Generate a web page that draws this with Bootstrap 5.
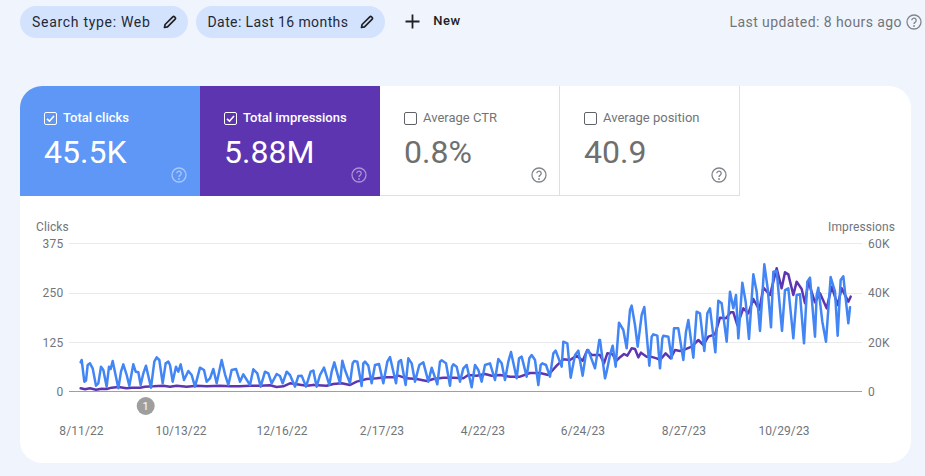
<!DOCTYPE html>
<html lang="en">
<head>
<meta charset="utf-8">
<title>Performance</title>
<link href="https://cdn.jsdelivr.net/npm/bootstrap@5.3.0/dist/css/bootstrap.min.css" rel="stylesheet">
<style>
html,body{height:100%;overflow:hidden}
body{background:#f0f4fd;font-family:Roboto,"Liberation Sans",sans-serif;color:#3c4043}
.topbar{height:86px;padding:6px 3px 0 20px;align-items:flex-start}
.pill{height:32px;border-radius:16px;background:#d3e3fd;color:#1f2937;font-size:14px;padding:0 11px 0 12px;display:flex;align-items:center;gap:12px;white-space:nowrap}
.pill-a{letter-spacing:.7px}
.pill-b{letter-spacing:.4px}
.pill svg{width:14px;height:14px}
.newbtn{font-size:13px;font-weight:500;color:#202124;letter-spacing:.5px;margin-left:20px;height:30px;gap:13px}
.updated{font-size:14px;color:#70757a;letter-spacing:.42px;height:32px;gap:4px}
.updated svg{width:16px;height:16px}
.panel{margin:0 14px 0 20px;height:377px;border-radius:22px;background:#fff;overflow:hidden;border:0}
.tile{width:180px;height:110px;padding:21px 0 0 24px;position:relative;flex:none}
.tile-blue{background:#5e97f6;color:#fff}
.tile-purple{background:#5e35b1;color:#fff}
.tile-plain{background:#fff;color:#70757a;border-right:1px solid #e0e0e0;border-bottom:1px solid #e0e0e0}
.tile-plain .val{color:#6f6f6f}
.tile-plain .tip{right:12px;bottom:12px}
.lab{font-size:13px;line-height:22px;gap:6px}
.tile-blue .lab,.tile-purple .lab{font-weight:500}
.lab svg{width:13px;height:13px;flex:none}
.val{font-size:32px;line-height:38px;margin-top:4px}
.tip{position:absolute;right:13px;bottom:13px;width:16px;height:16px}
.plot{display:block;width:891px;height:267px}
.plot text{font-family:Roboto,"Liberation Sans",sans-serif;font-size:12px;fill:#70757a;letter-spacing:.1px}
.plot .axisnum{letter-spacing:.25px}
.gl{stroke:#e8eaed;stroke-width:1}
.ln{fill:none;stroke-linejoin:round;stroke-linecap:round;stroke-width:2.5;vector-effect:non-scaling-stroke}
.ln-b{stroke:#4285f4}
.ln-p{stroke:#5e35b1}
.plot .pin{fill:#fff;font-size:11px;letter-spacing:0}
</style>
</head>
<body>
<div class="topbar d-flex">
  <div class="pill pill-a me-2">Search type: Web
    <svg viewBox="0 0 14 14" fill="none" stroke="#202124" stroke-width="1.7" stroke-linejoin="round"><path d="M1.500 12.500l.6-3L9.800 1.800a1.200 1.200 0 0 1 1.700 0l.7.7a1.200 1.200 0 0 1 0 1.700L4.500 11.900z"/></svg>
  </div>
  <div class="pill pill-b">Date: Last 16 months
    <svg viewBox="0 0 14 14" fill="none" stroke="#202124" stroke-width="1.7" stroke-linejoin="round"><path d="M1.500 12.500l.6-3L9.800 1.800a1.200 1.200 0 0 1 1.700 0l.7.7a1.200 1.200 0 0 1 0 1.700L4.500 11.900z"/></svg>
  </div>
  <div class="newbtn d-flex align-items-center">
    <svg width="15" height="15" viewBox="0 0 15 15" stroke="#202124" stroke-width="1.8"><path d="M7.500.5v14M.5 7.500h14"/></svg>New
  </div>
  <div class="updated d-flex align-items-center ms-auto">Last updated: 8 hours ago
    <svg viewBox="0 0 16 16" fill="none"><circle cx="8" cy="8" r="7" stroke="#80868b" stroke-width="1.300"/><path d="M5.800 6.300a2.200 2.200 0 1 1 3.500 1.800c-.8.5-1.300 1-1.300 1.900" stroke="#80868b" stroke-width="1.300"/><circle cx="8" cy="12" r=".9" fill="#80868b"/></svg>
  </div>
</div>

<div class="card panel">
  <div class="d-flex">
    <div class="tile tile-blue">
      <div class="lab d-flex align-items-center"><svg viewBox="0 0 13 13" fill="none" stroke="#fff"><rect x=".5" y=".5" width="12" height="12" rx="1.500"/><path d="M3 6.800l2.500 2.400L10 4" stroke-width="1.600"/></svg>Total clicks</div>
      <div class="val">45.5K</div>
      <svg class="tip" viewBox="0 0 16 16" fill="none"><circle cx="8" cy="8" r="7" stroke="#a9c8fa" stroke-width="1.300"/><path d="M5.800 6.300a2.200 2.200 0 1 1 3.500 1.800c-.8.5-1.300 1-1.300 1.900" stroke="#a9c8fa" stroke-width="1.300"/><circle cx="8" cy="12" r=".9" fill="#a9c8fa"/></svg>
    </div>
    <div class="tile tile-purple">
      <div class="lab d-flex align-items-center"><svg viewBox="0 0 13 13" fill="none" stroke="#fff"><rect x=".5" y=".5" width="12" height="12" rx="1.500"/><path d="M3 6.800l2.500 2.400L10 4" stroke-width="1.600"/></svg>Total impressions</div>
      <div class="val">5.88M</div>
      <svg class="tip" viewBox="0 0 16 16" fill="none"><circle cx="8" cy="8" r="7" stroke="#a993d6" stroke-width="1.300"/><path d="M5.800 6.300a2.200 2.200 0 1 1 3.500 1.800c-.8.5-1.300 1-1.300 1.900" stroke="#a993d6" stroke-width="1.300"/><circle cx="8" cy="12" r=".9" fill="#a993d6"/></svg>
    </div>
    <div class="tile tile-plain">
      <div class="lab d-flex align-items-center"><svg viewBox="0 0 13 13" fill="none" stroke="#5f6368"><rect x=".5" y=".5" width="12" height="12" rx="1.500"/></svg>Average CTR</div>
      <div class="val">0.8%</div>
      <svg class="tip" viewBox="0 0 16 16" fill="none"><circle cx="8" cy="8" r="7" stroke="#80868b" stroke-width="1.300"/><path d="M5.800 6.300a2.200 2.200 0 1 1 3.500 1.800c-.8.5-1.300 1-1.300 1.900" stroke="#80868b" stroke-width="1.300"/><circle cx="8" cy="12" r=".9" fill="#80868b"/></svg>
    </div>
    <div class="tile tile-plain">
      <div class="lab d-flex align-items-center"><svg viewBox="0 0 13 13" fill="none" stroke="#5f6368"><rect x=".5" y=".5" width="12" height="12" rx="1.500"/></svg>Average position</div>
      <div class="val">40.9</div>
      <svg class="tip" viewBox="0 0 16 16" fill="none"><circle cx="8" cy="8" r="7" stroke="#80868b" stroke-width="1.300"/><path d="M5.800 6.300a2.200 2.200 0 1 1 3.500 1.800c-.8.5-1.300 1-1.300 1.900" stroke="#80868b" stroke-width="1.300"/><circle cx="8" cy="12" r=".9" fill="#80868b"/></svg>
    </div>
  </div>

  <svg class="plot" viewBox="20 196 891 267">
    <line class="gl" x1="69" x2="862" y1="243.500" y2="243.500"/>
    <line class="gl" x1="69" x2="862" y1="293.500" y2="293.500"/>
    <line class="gl" x1="69" x2="862" y1="342.500" y2="342.500"/>
    <line x1="69" x2="862" y1="391.500" y2="391.500" stroke="#9aa0a6"/>

    <text x="36" y="231">Clicks</text>
    <text x="895" y="231" text-anchor="end">Impressions</text>
    <g text-anchor="end">
      <text class="axisnum" x="63.500" y="248">375</text><text class="axisnum" x="63.500" y="297">250</text><text class="axisnum" x="63.500" y="347">125</text><text class="axisnum" x="63.500" y="396">0</text>
    </g>
    <text class="axisnum" x="868" y="248">60K</text><text class="axisnum" x="868" y="297">40K</text><text class="axisnum" x="868" y="347">20K</text><text class="axisnum" x="868" y="396">0</text>
    <g text-anchor="middle">
      <text x="81.500" y="435">8/11/22</text><text x="181" y="435">10/13/22</text><text x="282" y="435">12/16/22</text><text x="382" y="435">2/17/23</text><text x="483" y="435">4/22/23</text><text x="583" y="435">6/24/23</text><text x="684" y="435">8/27/23</text><text x="784" y="435">10/29/23</text>
    </g>

    <g transform="translate(20 215) scale(.33333)">
      <polyline class="ln ln-p" points="182,520 195,523 210,520 228,524 245,521 260,522 275,518 295,516 320,520 335,518 360,518 375,515 400,514 430,512 450,515 470,512 500,515 530,512 560,514 600,512 630,514 660,514 690,512 720,512 750,511 770,516 790,514 810,505 830,508 860,512 880,510"/>
      <polyline class="ln ln-b" points="182,442 185,435 193,500 198,497 203,450 210,445 218,460 228,512 235,505 243,455 250,465 260,515 267,455 272,462 278,438 295,520 303,470 310,448 320,480 328,512 340,448 347,470 355,472 362,510 370,475 378,452 393,518 403,440 410,427 418,435 428,505 437,445 445,440 450,450 458,500 468,455 475,470 482,448 492,495 505,468 515,480 525,515 540,458 552,465 560,500 570,490 580,462 590,505 605,435 615,478 625,510 635,465 648,462 660,500 670,478 690,510 700,463 712,475 722,515 735,470 745,475 755,505 770,477 780,483 788,505 800,470 810,480 825,515 835,483 845,482 858,515 872,470 880,467"/>
    </g>
    <g transform="translate(300 215) scale(.33333)">
      <polyline class="ln ln-p" points="40,510 80,512 100,507 125,505 150,510 170,500 200,492 230,490 260,487 280,487 295,482 320,490 350,492 380,498 400,492 430,488 460,488 490,490 505,480 530,482 555,477 575,482 600,480 630,485 660,485 690,474 720,474 745,480 770,452 790,433 810,435 830,422 848,437 862,405 875,420 898,420"/>
      <polyline class="ln ln-b" points="40,467 50,515 60,480 72,458 88,510 95,470 103,442 120,505 127,437 135,465 150,505 158,445 163,438 172,440 185,513 190,445 195,440 205,452 215,505 225,450 237,447 250,505 262,440 270,426 288,505 296,440 303,435 317,510 325,430 335,445 345,500 358,450 370,442 385,500 395,458 412,508 420,440 425,436 438,445 450,512 456,455 460,448 470,455 480,500 490,460 500,450 515,517 525,450 535,465 545,500 555,450 570,445 585,495 595,432 605,445 615,495 625,440 633,411 650,490 657,430 665,425 680,485 688,430 695,420 705,435 715,510 722,450 727,445 738,450 750,485 760,415 767,407 785,455 790,380 802,385 812,488 825,420 835,407 848,482 858,415 865,405 872,425 885,460 892,415 898,375"/>
    </g>
    <g transform="translate(600 215) scale(.33333)">
      <polyline class="ln ln-p" points="0,420 12,445 22,415 38,418 48,438 62,425 72,417 82,422 95,400 105,402 115,427 123,413 140,425 152,425 170,430 180,435 197,415 212,430 225,405 240,408 255,403 275,395 295,375 310,390 325,365 345,358 360,308 378,310 392,292 400,292 412,330 430,280 445,295 460,252 478,285 490,218 510,240 530,160 545,220 555,172 565,178 580,240 590,200 605,222 615,265 625,200 645,262 660,235 680,280 695,215 713,270 725,220 745,260 752,245"/>
      <polyline class="ln ln-b" points="0,375 15,490 20,470 30,420 38,392 47,455 57,323 70,345 80,400 90,285 95,272 105,330 113,395 125,300 133,276 148,452 155,365 160,358 172,362 180,460 187,370 190,362 205,365 215,430 222,340 235,340 250,435 258,350 265,315 280,428 290,290 300,295 313,408 322,295 330,280 346,412 355,257 365,265 380,380 390,230 400,280 408,240 415,370 427,203 437,260 447,372 460,178 470,230 480,348 493,148 503,220 513,337 520,170 530,168 546,348 555,225 565,220 580,370 590,240 600,238 612,385 622,200 630,188 645,365 650,240 655,218 667,320 678,380 692,186 705,230 713,362 722,195 730,184 745,325 750,277"/>
    </g>
    <circle cx="145.700" cy="406" r="9" fill="#9e9e9e"/>
    <text class="pin" x="145.700" y="410" text-anchor="middle">1</text>
  </svg>
</div>
<script src="https://cdn.jsdelivr.net/npm/bootstrap@5.3.0/dist/js/bootstrap.bundle.min.js"></script>
</body>
</html>
